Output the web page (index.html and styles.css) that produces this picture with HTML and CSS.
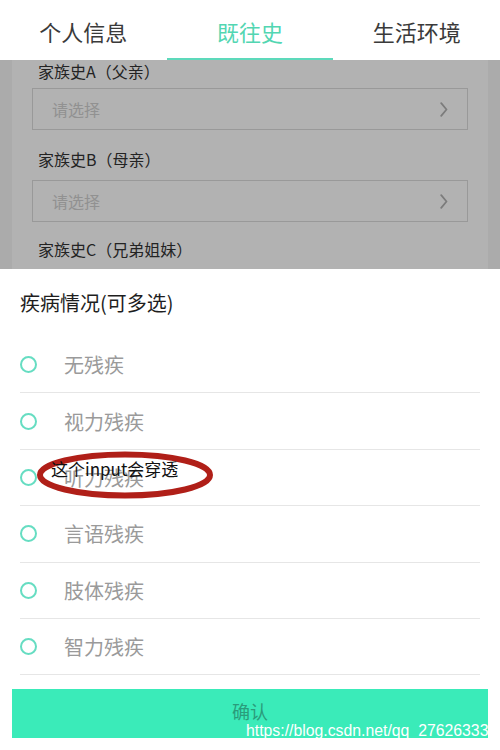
FILE: index.html
```html
<!DOCTYPE html>
<html lang="zh-CN">
<head>
<meta charset="utf-8">
<title>既往史</title>
<link rel="stylesheet" href="styles.css">
</head>
<body>
<header class="tabs">
  <div class="tab">个人信息</div>
  <div class="tab active">既往史</div>
  <div class="tab">生活环境</div>
</header>

<main class="page">
  <section class="card">
    <div class="field">
      <div class="label">家族史A（父亲）</div>
      <div class="select"><span class="ph">请选择</span><svg class="chev" width="8" height="15" viewBox="0 0 8 15"><path d="M1.2 1.2 L6.5 7.5 L1.2 13.8" fill="none" stroke="#b2b2b2" stroke-width="1.8" stroke-linecap="round" stroke-linejoin="round"/></svg></div>
    </div>
    <div class="field">
      <div class="label">家族史B（母亲）</div>
      <div class="select"><span class="ph">请选择</span><svg class="chev" width="8" height="15" viewBox="0 0 8 15"><path d="M1.2 1.2 L6.5 7.5 L1.2 13.8" fill="none" stroke="#b2b2b2" stroke-width="1.8" stroke-linecap="round" stroke-linejoin="round"/></svg></div>
    </div>
    <div class="field">
      <div class="label label-c">家族史C（兄弟姐妹）</div>
    </div>
  </section>
</main>

<div class="mask"></div>

<section class="sheet">
  <h2 class="sheet-title">疾病情况(可多选)</h2>
  <ul class="options">
    <li class="option"><span class="radio"></span><span class="opt-text">无残疾</span></li>
    <li class="option"><span class="radio"></span><span class="opt-text">视力残疾</span></li>
    <li class="option"><span class="radio"></span><span class="opt-text">听力残疾</span></li>
    <li class="option"><span class="radio"></span><span class="opt-text">言语残疾</span></li>
    <li class="option"><span class="radio"></span><span class="opt-text">肢体残疾</span></li>
    <li class="option"><span class="radio"></span><span class="opt-text">智力残疾</span></li>
  </ul>
  <button class="confirm">确认</button>
</section>

<div class="note-text">这个input会穿透</div>
<svg class="note-ring" width="190" height="60" viewBox="0 0 190 60">
  <ellipse cx="89" cy="28" rx="85" ry="20.5" fill="none" stroke="#b01f18" stroke-width="6"/>
</svg>

<div class="watermark">https://blog.csdn.net/qq_27626333</div>
</body>
</html>
```

FILE: styles.css
```css
* {
  box-sizing: border-box;
}

html, body {
  margin: 0;
  padding: 0;
}

body {
  width: 500px;
  height: 750px;
  overflow: hidden;
  background: #f5f5f5;
  font-family: "Noto Sans CJK SC", "Noto Sans", sans-serif;
  color: #333;
  position: relative;
}

.tabs {
  position: relative;
  z-index: 3;
  display: grid;
  grid-template-columns: 1fr 1fr 1fr;
  height: 60px;
  background: #fff;
}

.tab {
  display: flex;
  align-items: center;
  justify-content: center;
  font-size: 22px;
  line-height: 30px;
  color: #3a3a3a;
  padding-top: 4px;
  border-bottom: 2px solid transparent;
}

.tab.active {
  color: #52d6b2;
  border-bottom-color: #5dd9bb;
}

.page {
  padding: 0 12px;
}

.card {
  background: #fff;
  padding: 0 20px 20px;
  height: 220px;
  overflow: hidden;
}

.label {
  font-size: 16px;
  line-height: 22px;
  padding: 18px 0 10px 6px;
  color: #333;
}

.field:first-child .label {
  padding-top: 0;
  padding-bottom: 6px;
}

.label-c {
  padding-top: 16px;
}

.select {
  height: 42px;
  border: 1px solid #dcdcdc;
  display: flex;
  align-items: center;
  justify-content: space-between;
  padding: 0 19px 0 19px;
}

.ph {
  font-size: 16px;
  color: #d0d0d0;
}

.chev {
  display: block;
  flex: none;
}

.mask {
  position: absolute;
  left: 0;
  right: 0;
  top: 60px;
  bottom: 0;
  background: rgba(0, 0, 0, 0.3);
  z-index: 2;
}

.sheet {
  position: absolute;
  left: 0;
  right: 0;
  bottom: 0;
  height: 481px;
  background: #fff;
  z-index: 4;
  display: flex;
  flex-direction: column;
}

.sheet-title {
  margin: 0;
  height: 68px;
  line-height: 68px;
  padding-left: 20px;
  font-size: 20px;
  font-weight: normal;
  color: #1e1e1e;
}

.options {
  list-style: none;
  margin: 0 20px;
  padding: 0;
}

.option {
  display: flex;
  align-items: center;
  height: 56.4px;
  border-bottom: 1px solid #e6e6e6;
}

.radio {
  width: 17px;
  height: 17px;
  border: 2px solid #66ddc2;
  border-radius: 50%;
  flex: none;
}

.opt-text {
  margin-left: 27px;
  font-size: 20px;
  color: #9a9a9a;
}

.confirm {
  margin: 14px 12px 0 12px;
  height: 49px;
  border: none;
  background: #3aebb9;
  color: #2a9c7b;
  font-family: "Noto Sans CJK SC", sans-serif;
  font-size: 18px;
  line-height: 24px;
  padding: 0 0 6px 0;
}

.note-text {
  position: absolute;
  left: 51px;
  top: 458px;
  z-index: 6;
  font-size: 17px;
  line-height: 22px;
  color: #111;
}

.note-ring {
  position: absolute;
  left: 36px;
  top: 447px;
  z-index: 5;
}

.watermark {
  position: absolute;
  left: 246px;
  top: 722px;
  z-index: 7;
  font-family: "Liberation Sans", Arial, sans-serif;
  font-size: 15.8px;
  line-height: 18px;
  color: #fff;
  white-space: nowrap;
}
```
